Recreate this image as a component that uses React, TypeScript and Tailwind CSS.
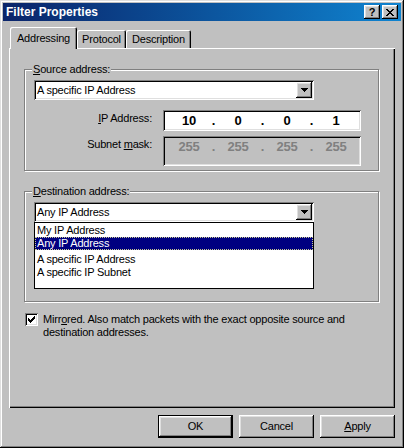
import React from 'react';

const raised =
  'shadow-[inset_-1px_-1px_0_#000,inset_1px_1px_0_#fff,inset_-2px_-2px_0_#808080,inset_2px_2px_0_#dfdfdf]';
const sunken =
  'shadow-[inset_1px_1px_0_#808080,inset_-1px_-1px_0_#fff,inset_2px_2px_0_#000,inset_-2px_-2px_0_#dfdfdf]';

function Arrow() {
  return (
    <svg width="7" height="4" viewBox="0 0 7 4" shapeRendering="crispEdges">
      <path d="M0 0h7v1H0zM1 1h5v1H1zM2 2h3v1H2zM3 3h1v1H3z" fill="#000" />
    </svg>
  );
}

function CloseGlyph() {
  return (
    <svg width="8" height="7" viewBox="0 0 8 7" shapeRendering="crispEdges">
      <path
        d="M0 0h2v1H0zM6 0h2v1H6zM1 1h2v1H1zM5 1h2v1H5zM2 2h4v1H2zM3 3h2v1H3zM2 4h4v1H2zM1 5h2v1H1zM5 5h2v1H5zM0 6h2v1H0zM6 6h2v1H6z"
        fill="#000"
      />
    </svg>
  );
}

function CheckGlyph() {
  return (
    <svg width="7" height="7" viewBox="0 0 7 7" shapeRendering="crispEdges">
      <path
        d="M6 0h1v1H6zM5 1h2v1H5zM0 2h1v1H0zM4 2h3v1H4zM0 3h2v1H0zM3 3h3v1H3zM0 4h5v1H0zM1 5h3v1H1zM2 6h1v1H2z"
        fill="#000"
      />
    </svg>
  );
}

function Combo({ value }: { value: string }) {
  return (
    <div className={`w-[280px] h-[20px] bg-white flex items-center pl-[3px] pr-[2px] ${sunken}`}>
      <span className="flex-1 whitespace-nowrap">{value}</span>
      <div className={`w-[16px] h-[16px] bg-[#c0c0c0] flex items-center justify-center ${raised}`}>
        <Arrow />
      </div>
    </div>
  );
}

function Octets({ values, disabled }: { values: string[]; disabled?: boolean }) {
  return (
    <div
      className={`flex items-center pl-[13px] text-[13px] font-bold ${
        disabled ? 'h-[19px] text-[#808080]' : 'h-[21px] text-black'
      }`}
    >
      {values.map((v, i) => (
        <React.Fragment key={i}>
          {i > 0 && <span className="w-[23px] text-center">.</span>}
          <span className="w-[26px] text-center">{v}</span>
        </React.Fragment>
      ))}
    </div>
  );
}

function Group({
  label,
  children,
  className = '',
}: {
  label: React.ReactNode;
  children: React.ReactNode;
  className?: string;
}) {
  return (
    <fieldset
      className={`w-[355px] border border-[#808080] shadow-[1px_1px_0_#fff,inset_1px_1px_0_#fff] px-[9px] pt-[4px] ${className}`}
    >
      <legend className="-ml-[2px] px-[1px] bg-[#c0c0c0] leading-[13px] whitespace-nowrap">{label}</legend>
      {children}
    </fieldset>
  );
}

function Button({ children, isDefault }: { children: React.ReactNode; isDefault?: boolean }) {
  return (
    <div
      className={`w-[75px] h-[23px] flex items-center justify-center bg-[#c0c0c0] ${
        isDefault
          ? 'shadow-[inset_0_0_0_1px_#000,inset_-2px_-2px_0_#000,inset_2px_2px_0_#fff,inset_-3px_-3px_0_#808080,inset_3px_3px_0_#dfdfdf]'
          : raised
      }`}
    >
      {children}
    </div>
  );
}

export default function App() {
  return (
    <div
      className="w-[404px] h-[448px] bg-[#c0c0c0] p-[3px] flex flex-col font-['Liberation_Sans',Arial,sans-serif] text-[11px] leading-[13px] tracking-[-0.2px] text-black shadow-[inset_-1px_-1px_0_#000,inset_1px_1px_0_#dfdfdf,inset_-2px_-2px_0_#808080,inset_2px_2px_0_#fff]"
    >
      {/* title bar */}
      <div className="h-[18px] flex items-center bg-linear-to-r from-[#0a246a] to-[#1084d0] pl-[3px] pr-[3px]">
        <span className="flex-1 text-white font-bold text-[12px] tracking-[0px]">Filter Properties</span>
        <div className="flex gap-[2px]">
          <div
            className={`w-[16px] h-[14px] bg-[#c0c0c0] flex items-center justify-center font-bold text-[11px] leading-[11px] tracking-[0px] ${raised}`}
          >
            ?
          </div>
          <div className={`w-[16px] h-[14px] bg-[#c0c0c0] flex items-center justify-center ${raised}`}>
            <CloseGlyph />
          </div>
        </div>
      </div>

      {/* tabs */}
      <div className="mt-[6px] mx-[6px] h-[21px] flex items-end pl-[1px]">
        <div className="relative z-10 w-[67px] h-[22px] -mb-px pt-[5px] text-center bg-[#c0c0c0] rounded-t-[2px] shadow-[inset_1px_1px_0_#fff,inset_-1px_0_0_#000,inset_-2px_0_0_#808080]">
          Addressing
        </div>
        <div className="w-[49px] h-[18px] pt-[3px] text-center rounded-t-[2px] shadow-[inset_1px_1px_0_#fff,inset_-1px_0_0_#000,inset_-2px_0_0_#808080]">
          Protocol
        </div>
        <div className="w-[65px] h-[18px] pt-[3px] text-center rounded-t-[2px] shadow-[inset_1px_1px_0_#fff,inset_-1px_0_0_#000,inset_-2px_0_0_#808080]">
          Description
        </div>
      </div>

      {/* tab panel */}
      <div className="mx-[6px] h-[360px] pt-[15px] px-[15px] flex flex-col shadow-[inset_1px_1px_0_#fff,inset_-1px_-1px_0_#000,inset_-2px_-2px_0_#808080]">
        <Group
          className="pb-[4px]"
          label={
            <>
              <span className="underline">S</span>ource address:
            </>
          }
        >
          <Combo value="A specific IP Address" />
          <div className="mt-[10px] flex items-start">
            <div className="w-[118px] pt-[2px] text-right whitespace-nowrap">
              <span className="underline">I</span>P Address:
            </div>
            <div className={`ml-[11px] w-[198px] h-[21px] bg-white ${sunken}`}>
              <Octets values={['10', '0', '0', '1']} />
            </div>
          </div>
          <div className="mt-[5px] flex items-start">
            <div className="w-[118px] pt-[2px] text-right whitespace-nowrap">
              Subnet <span className="underline">m</span>ask:
            </div>
            <div className={`ml-[11px] w-[198px] h-[30px] bg-[#c0c0c0] pt-[1px] ${sunken}`}>
              <Octets values={['255', '255', '255', '255']} disabled />
            </div>
          </div>
        </Group>

        <Group
          className="mt-[14px] pb-[12px]"
          label={
            <>
              <span className="underline">D</span>estination address:
            </>
          }
        >
          <Combo value="Any IP Address" />
          <div className="w-[280px] h-[67px] bg-white border border-black flex flex-col">
            <div className="h-[14px] pt-[1px] px-[2px]">My IP Address</div>
            <div className="h-[13px] px-[1px] bg-[#000080] text-white border border-dotted border-[#c8c890] leading-[11px]">
              Any IP Address
            </div>
            <div className="mt-[3px] h-[13px] px-[2px]">A specific IP Address</div>
            <div className="h-[13px] px-[2px]">A specific IP Subnet</div>
          </div>
        </Group>

        <div className="mt-[11px] ml-[1px] flex items-start">
          <div className={`w-[13px] h-[13px] bg-white flex items-center justify-center shrink-0 ${sunken}`}>
            <CheckGlyph />
          </div>
          <div className="ml-[5px] whitespace-nowrap">
            Mirr<span className="underline">o</span>red. Also match packets with the exact opposite source and
            <br />
            destination addresses.
          </div>
        </div>
      </div>

      {/* buttons */}
      <div className="mt-[7px] flex justify-end gap-[6px] pr-[6px]">
        <Button isDefault>OK</Button>
        <Button>Cancel</Button>
        <Button>
          <span>
            <span className="underline">A</span>pply
          </span>
        </Button>
      </div>
    </div>
  );
}
